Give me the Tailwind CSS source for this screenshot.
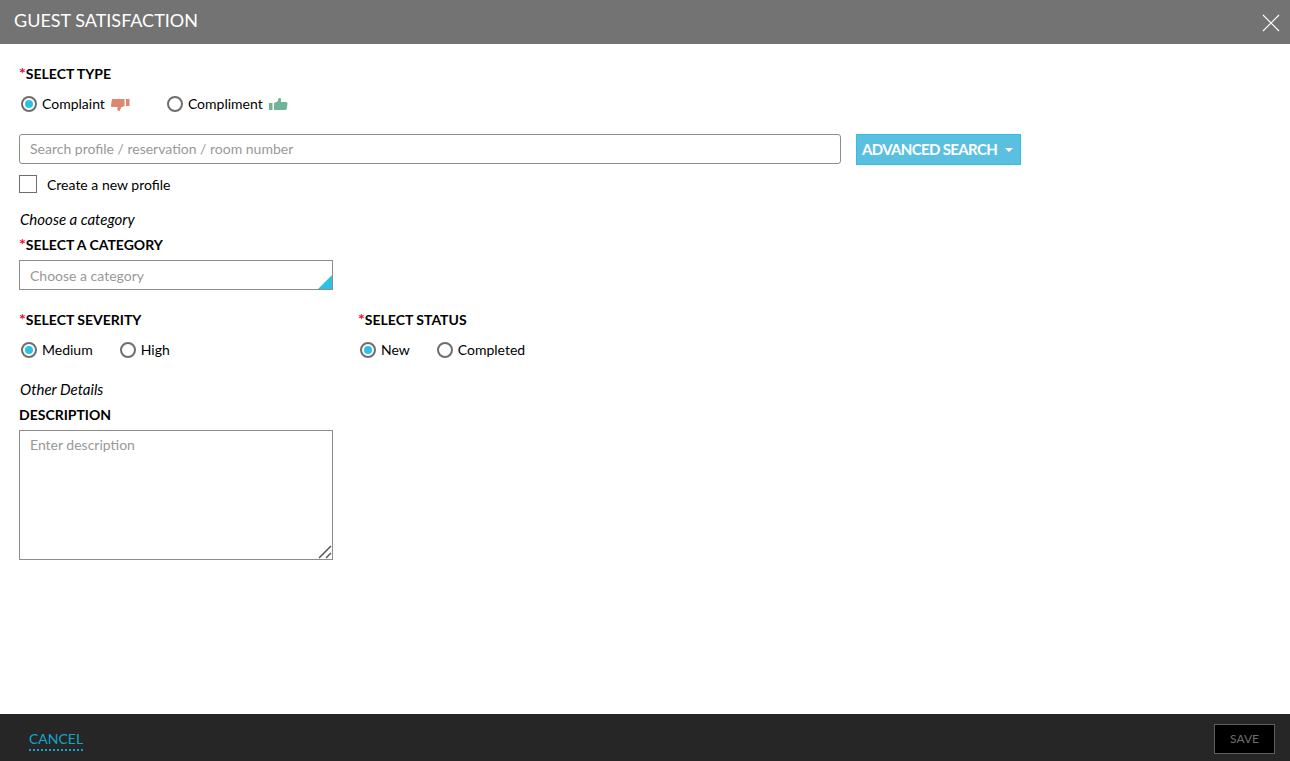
<!DOCTYPE html>
<html lang="en">
<head>
  <meta charset="UTF-8">
  <title>Guest Satisfaction</title>
  <script src="https://cdn.jsdelivr.net/npm/@tailwindcss/browser@4"></script>
</head>
<body class="bg-white h-[761px] overflow-hidden flex flex-col font-['Lato',sans-serif] text-[14px] text-black">

  <!-- header -->
  <header class="h-[44px] shrink-0 bg-[#737373] flex items-center justify-between pl-[14px] pr-[10px]">
    <h1 class="text-[18px] text-white pb-[4px]">GUEST SATISFACTION</h1>
    <svg width="18" height="18" viewBox="0 0 18 18" class="mt-[2px]" stroke="#fff" stroke-width="1.2" fill="none"><path d="M1 1L17 17M17 1L1 17"/></svg>
  </header>

  <main class="flex-1 pl-[19px] pt-[21px]">
    <div class="h-[18px] leading-[18px] font-bold"><span class="text-[#ff0033] text-[16px] leading-[10px]">*</span>SELECT TYPE</div>

    <div class="flex items-center h-[20px] mt-[11px] pl-[2px]">
      <span class="w-[16px] h-[16px] rounded-full border-2 border-[#6e6e6e] flex items-center justify-center"><span class="w-[8px] h-[8px] rounded-full bg-[#2ec1e6]"></span></span>
      <span class="ml-[5px] mb-[2px]">Complaint</span>
      <svg width="19" height="13" viewBox="0 0 19 13" class="ml-[6px] mt-[3px]" fill="#df8670"><path d="M2 0H13.500V7L10 8.500 9 11.500C8.500 12.300 6.500 12 6.300 10.500 6.200 9.500 6.500 8.500 6.800 8H1.500C.5 8-.1 7.200 0 6.300L.8 1.200C.9.5 1.300 0 2 0z"/><rect x="15" y="0" width="3.500" height="7"/></svg>
      <span class="ml-[37px] w-[16px] h-[16px] rounded-full border-2 border-[#6e6e6e]"></span>
      <span class="ml-[5px] mb-[2px]">Compliment</span>
      <svg width="19" height="13" viewBox="0 0 19 13" class="ml-[6px] -mt-[1px]" fill="#6fb39a"><path d="M16.500 13H5V6L8.500 4.500 9.500 1.500C10 .7 12 1 12.200 2.500 12.300 3.500 12 4.500 11.700 5H17C18 5 18.600 5.800 18.500 6.700L17.700 11.800C17.600 12.500 17.200 13 16.500 13z"/><rect x="0" y="6" width="3.500" height="7"/></svg>
    </div>

    <div class="flex mt-[20px]">
      <input class="w-[822px] h-[30px] border border-[#8c8c8c] rounded-[3px] px-[10px] pb-[2px] outline-none placeholder-[#999999]" placeholder="Search profile / reservation / room number">
      <button class="ml-[15px] w-[165px] h-[31px] bg-[#5bbfdf] border border-[#2ec1e6] text-white font-bold text-[15px] tracking-[-0.65px] flex items-center pl-[5px]">
        ADVANCED SEARCH
        <span class="ml-[8px] w-0 h-0 border-x-[4px] border-x-transparent border-t-[4px] border-t-white"></span>
      </button>
    </div>

    <label class="flex items-center mt-[10px] h-[18px]">
      <span class="w-[18px] h-[18px] border border-[#6e6e6e]"></span>
      <span class="ml-[10px]">Create a new profile</span>
    </label>

    <div class="italic text-[15px] pl-[1px] mt-[17px] h-[18px] leading-[18px]">Choose a category</div>
    <div class="h-[18px] leading-[18px] font-bold mt-[8px]"><span class="text-[#ff0033] text-[16px] leading-[10px]">*</span>SELECT A CATEGORY</div>

    <div class="relative w-[314px] h-[30px] mt-[6px] border border-[#8c8c8c] flex items-center px-[10px] text-[#999999]">
      Choose a category
      <span class="absolute right-0 bottom-0 w-0 h-0 border-l-[14px] border-l-transparent border-b-[14px] border-b-[#2ec1e6]"></span>
    </div>

    <div class="flex mt-[21px]">
      <div class="w-[339px]">
        <div class="h-[18px] leading-[18px] font-bold"><span class="text-[#ff0033] text-[16px] leading-[10px]">*</span>SELECT SEVERITY</div>
        <div class="flex items-center h-[20px] mt-[11px] pl-[2px]">
          <span class="w-[16px] h-[16px] rounded-full border-2 border-[#6e6e6e] flex items-center justify-center"><span class="w-[8px] h-[8px] rounded-full bg-[#2ec1e6]"></span></span>
          <span class="ml-[5px] mb-[2px]">Medium</span>
          <span class="ml-[27px] w-[16px] h-[16px] rounded-full border-2 border-[#6e6e6e]"></span>
          <span class="ml-[5px] mb-[2px]">High</span>
        </div>
      </div>
      <div>
        <div class="h-[18px] leading-[18px] font-bold"><span class="text-[#ff0033] text-[16px] leading-[10px]">*</span>SELECT STATUS</div>
        <div class="flex items-center h-[20px] mt-[11px] pl-[2px]">
          <span class="w-[16px] h-[16px] rounded-full border-2 border-[#6e6e6e] flex items-center justify-center"><span class="w-[8px] h-[8px] rounded-full bg-[#2ec1e6]"></span></span>
          <span class="ml-[5px] mb-[2px]">New</span>
          <span class="ml-[27px] w-[16px] h-[16px] rounded-full border-2 border-[#6e6e6e]"></span>
          <span class="ml-[5px] mb-[2px]">Completed</span>
        </div>
      </div>
    </div>

    <div class="italic text-[15px] pl-[1px] mt-[20px] h-[18px] leading-[18px]">Other Details</div>
    <div class="h-[18px] leading-[18px] font-bold mt-[8px]">DESCRIPTION</div>
    <div class="relative w-[314px] h-[130px] mt-[6px]">
      <textarea class="block w-full h-full resize-none border border-[#8c8c8c] px-[10px] py-[3px] outline-none placeholder-[#999999]" placeholder="Enter description"></textarea>
      <!-- resize grip -->
      <svg width="14" height="14" viewBox="0 0 14 14" class="absolute right-[1px] bottom-[1px]" stroke="#555" stroke-width="1.5" fill="none"><path d="M1 13L13 1M8 13L13 8"/></svg>
    </div>
  </main>

  <!-- footer -->
  <footer class="h-[47px] shrink-0 bg-[#262626] flex items-center justify-between pl-[29px] pr-[15px]">
    <a class="text-[#12a5cc] text-[14px] leading-[18px] pb-[1px] border-b-2 border-dotted border-[#12a5cc] mt-[6px]">CANCEL</a>
    <button class="w-[61px] h-[30px] mt-[2px] bg-black border border-[#5e5e5e] text-[#6e6e6e] text-[12px]">SAVE</button>
  </footer>

</body>
</html>
